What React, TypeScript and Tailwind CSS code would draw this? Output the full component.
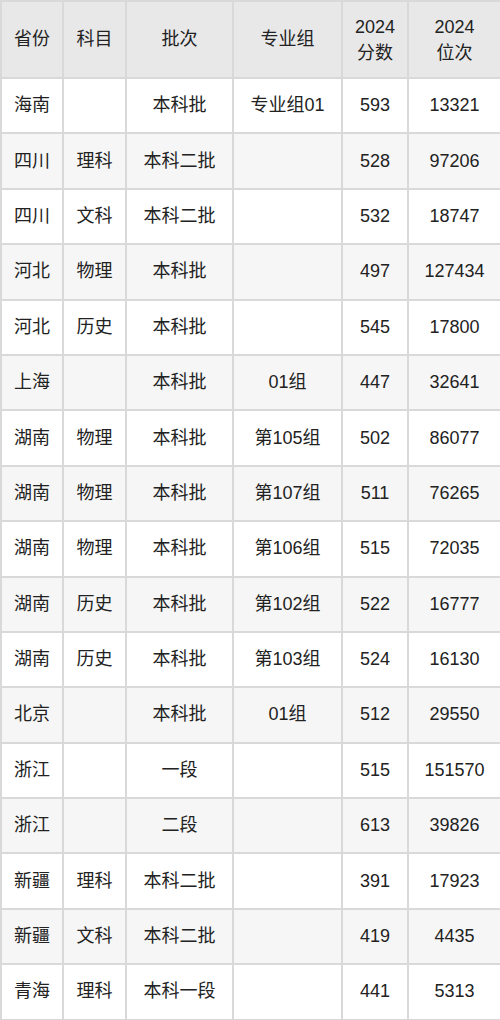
import React from "react";

const rows: string[][] = [
  ["海南", "", "本科批", "专业组01", "593", "13321"],
  ["四川", "理科", "本科二批", "", "528", "97206"],
  ["四川", "文科", "本科二批", "", "532", "18747"],
  ["河北", "物理", "本科批", "", "497", "127434"],
  ["河北", "历史", "本科批", "", "545", "17800"],
  ["上海", "", "本科批", "01组", "447", "32641"],
  ["湖南", "物理", "本科批", "第105组", "502", "86077"],
  ["湖南", "物理", "本科批", "第107组", "511", "76265"],
  ["湖南", "物理", "本科批", "第106组", "515", "72035"],
  ["湖南", "历史", "本科批", "第102组", "522", "16777"],
  ["湖南", "历史", "本科批", "第103组", "524", "16130"],
  ["北京", "", "本科批", "01组", "512", "29550"],
  ["浙江", "", "一段", "", "515", "151570"],
  ["浙江", "", "二段", "", "613", "39826"],
  ["新疆", "理科", "本科二批", "", "391", "17923"],
  ["新疆", "文科", "本科二批", "", "419", "4435"],
  ["青海", "理科", "本科一段", "", "441", "5313"],
];

const widths = ["w-[62px]", "w-[63px]", "w-[107px]", "w-[109px]", "w-[66px]", "w-[93px]"];

export default function App() {
  return (
    <div className="w-[500px] h-[1020px] bg-white" style={{ fontFamily: '"Liberation Sans", "Noto Sans CJK SC", sans-serif' }}>
      <table className="w-[499px] border-collapse table-fixed text-[18px] text-[#222222]">
        <colgroup>
          {widths.map((w, i) => (
            <col key={i} className={w} />
          ))}
        </colgroup>
        <thead>
          <tr className="h-[77px] bg-[#e8e8e8]">
            <th className="border-2 border-[#d9d9d9] font-normal text-left pl-[12px]">省份</th>
            <th className="border-2 border-[#d9d9d9] font-normal">科目</th>
            <th className="border-2 border-[#d9d9d9] font-normal">批次</th>
            <th className="border-2 border-[#d9d9d9] font-normal">专业组</th>
            <th className="border-2 border-[#d9d9d9] font-normal leading-[26px]">2024<br />分数</th>
            <th className="border-2 border-[#d9d9d9] font-normal leading-[26px]">2024<br />位次</th>
          </tr>
        </thead>
        <tbody>
          {rows.map((r, i) => (
            <tr key={i} className={`h-[55.4px] ${i % 2 === 1 ? "bg-[#f6f6f6]" : "bg-white"}`}>
              {r.map((c, j) => (
                <td
                  key={j}
                  className={`border-2 border-[#d9d9d9] ${j === 0 ? "text-left pl-[12px]" : "text-center"}`}
                >
                  {c}
                </td>
              ))}
            </tr>
          ))}
        </tbody>
      </table>
    </div>
  );
}
